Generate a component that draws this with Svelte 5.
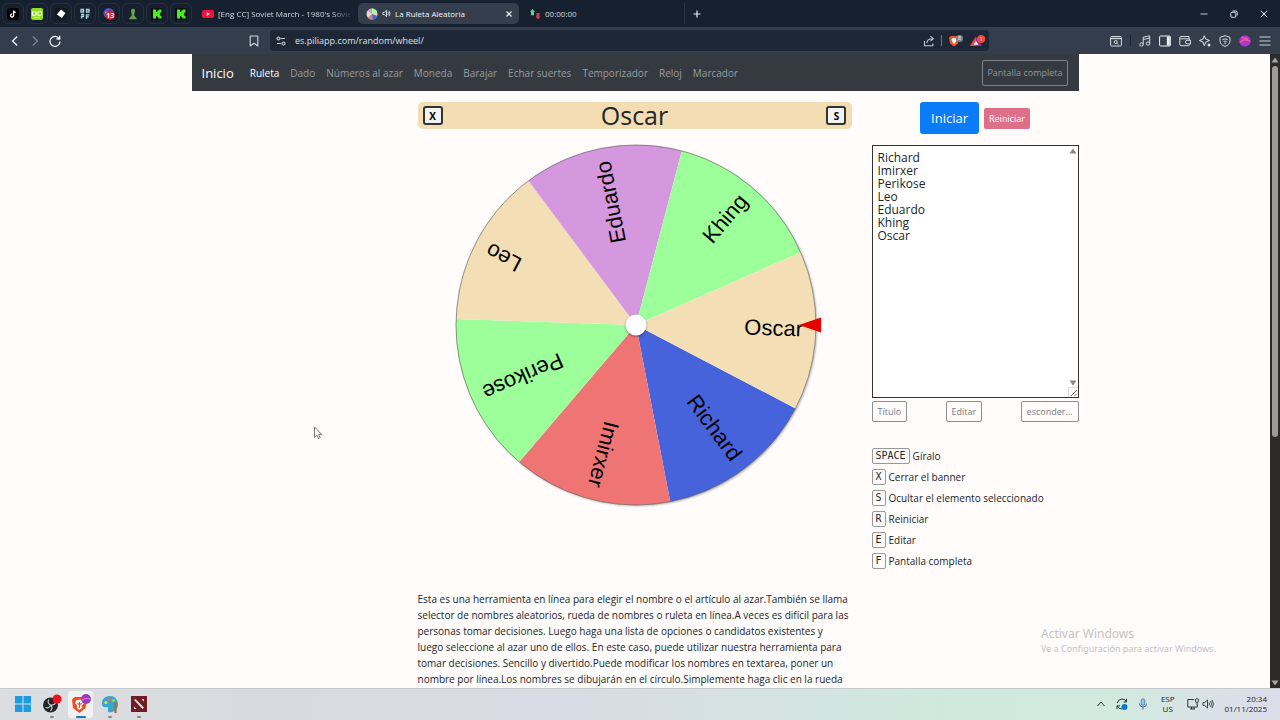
<script lang="ts">
  const navLinks = [
    "Ruleta",
    "Dado",
    "Números al azar",
    "Moneda",
    "Barajar",
    "Echar suertes",
    "Temporizador",
    "Reloj",
    "Marcador",
  ];

  const shortcuts = [
    { key: "SPACE", label: "Gíralo" },
    { key: "X", label: "Cerrar el banner" },
    { key: "S", label: "Ocultar el elemento seleccionado" },
    { key: "R", label: "Reiniciar" },
    { key: "E", label: "Editar" },
    { key: "F", label: "Pantalla completa" },
  ];

  const colors = [
    "#4763dc",
    "#ef7575",
    "#9dff99",
    "#f3deb6",
    "#d597de",
    "#9dff99",
    "#f3deb6",
  ];

  const radius = 180;
  const labelRadius = 167;
  const startAngle = 27.6;

  let text = $state("Richard\nImirxer\nPerikose\nLeo\nEduardo\nKhing\nOscar");
  let url = $state("es.piliapp.com/random/wheel/");

  const names = $derived(text.split("\n").filter((n) => n.trim() !== ""));
  const step = $derived(360 / names.length);

  const point = (angle: number) => {
    const rad = (angle * Math.PI) / 180;
    return `${(Math.cos(rad) * radius).toFixed(2)} ${(Math.sin(rad) * radius).toFixed(2)}`;
  };

  const slices = $derived(
    names.map((name, i) => {
      const from = startAngle + i * step;
      return {
        name,
        color: colors[i % colors.length],
        angle: from + step / 2,
        path: `M0 0L${point(from)}A${radius} ${radius} 0 0 1 ${point(from + step)}Z`,
      };
    }),
  );
</script>

<div class="screen">
  <header class="tabs">
    <div class="pinned">
      <button class="pin" aria-label="TikTok">
        <svg viewBox="0 0 12 12"><rect width="12" height="12" rx="2" fill="#000" /><path d="M6.6 2.5v5a1.5 1.5 0 1 1-1.5-1.5M6.6 2.6c.2 1.2 1 1.8 2.1 1.9" fill="none" stroke="#fff" stroke-width="1.3" /></svg>
      </button>
      <button class="pin" aria-label="Chat">
        <svg viewBox="0 0 12 12"><rect width="12" height="12" rx="2" fill="#8fe01f" /><rect x="1.5" y="3.5" width="3.6" height="4" rx="1.2" fill="none" stroke="#fff" stroke-width="1.2" /><rect x="6.9" y="3.5" width="3.6" height="4" rx="1.2" fill="none" stroke="#fff" stroke-width="1.2" /><path d="M3 9.5h6" stroke="#fff" /></svg>
      </button>
      <button class="pin" aria-label="Diamond">
        <svg viewBox="0 0 12 12"><rect width="12" height="12" rx="2" fill="#111820" /><path d="M6 1.5 10.5 5 7 10 1.8 6.4Z" fill="#fff" /></svg>
      </button>
      <button class="pin" aria-label="Overlay">
        <svg viewBox="0 0 12 12"><path d="M2 1.500h2.500V4H2zM7.500 1.500H10V4H7.500zM2 6.500h2.500v2H2.500v2M7.500 11V6.800h3M7.500 8.800h2.300" fill="none" stroke="#a9d6dc" stroke-width="1.300" /></svg>
      </button>
      <button class="pin" aria-label="Messages">
        <svg viewBox="0 0 12 12"><circle cx="5.6" cy="5.3" r="5.2" fill="#4a55c6" /><path d="M2.3 4.4h6" stroke="#b8bef5" stroke-width="1.6" /><circle cx="7.2" cy="7.2" r="4.8" fill="#d9202a" /><text x="7.2" y="9.7" text-anchor="middle" font-size="7" font-weight="700" fill="#fff">13</text></svg>
      </button>
      <button class="pin" aria-label="Chess">
        <svg viewBox="0 0 12 12"><path d="M6 .8a2 2 0 0 1 1.2 3.6h.8v1H7.1c0 2 .6 3.2 2 4.1.6.5.7 1.5.7 1.7H2.200c0-.2.1-1.200.7-1.700C4.300 8.600 4.900 7.400 4.900 5.400H4v-1h.8A2 2 0 0 1 6 .8Z" fill="#6ba04f" /></svg>
      </button>
      <button class="pin" aria-label="Kick">
        <svg viewBox="0 0 12 12"><rect width="12" height="12" rx="1" fill="#0a0f0a" /><path d="M2 1.500h3v2.500h1.200V2.800h1.200V1.500h3.100v3H9.200v1.500H8.500v.3h.7v1.400h1.300v2.800H7.400V9.200H6.200V8H5v2.500H2Z" fill="#45f01e" /></svg>
      </button>
      <button class="pin" aria-label="Kick">
        <svg viewBox="0 0 12 12"><rect width="12" height="12" rx="1" fill="#0a0f0a" /><path d="M2 1.500h3v2.500h1.200V2.800h1.200V1.500h3.100v3H9.200v1.500H8.500v.3h.7v1.400h1.300v2.800H7.400V9.200H6.200V8H5v2.500H2Z" fill="#45f01e" /></svg>
      </button>
    </div>
    <button class="tab">
      <svg class="fav" viewBox="0 0 12 12"><rect y="2" width="12" height="8" rx="2" fill="#f0143c" /><path d="m4.800 4.200 3 1.800-3 1.800Z" fill="#fff" /></svg>
      <span class="title faded">[Eng CC] Soviet March - 1980's Sovie</span>
    </button>
    <button class="tab active">
      <svg class="fav" viewBox="0 0 12 12"><circle cx="6" cy="6" r="5.500" fill="#ead8b8" /><path d="M6 6 1.800 2.500A5.500 5.500 0 0 1 6 .5Z" fill="#d597de" /><path d="M6 6V.5a5.500 5.500 0 0 1 5 3.500Z" fill="#9dff99" /><path d="m6 6 5.300 2A5.500 5.500 0 0 1 6.500 11.500Z" fill="#4763dc" /><path d="M6 6v5.500A5.500 5.500 0 0 1 2 9.700Z" fill="#ef7575" /></svg>
      <svg class="sound" viewBox="0 0 10 10"><path d="M1 3.800h1.600L5 1.500v7L2.600 6.200H1ZM6.500 3.500q1.200 1.500 0 3M7.700 2q2.400 3 0 6" fill="none" stroke="#e6eaf0" /></svg>
      <span class="title">La Ruleta Aleatoria</span>
      <svg class="close" viewBox="0 0 8 8"><path d="m1.500 1.500 5 5m0-5-5 5" stroke="#f2f4f7" stroke-width="1.200" /></svg>
    </button>
    <button class="tab timer">
      <svg class="fav" viewBox="0 0 12 12"><path d="M3.500 1 6 3.800H5v3.400H2V3.800H1Z" fill="#57d977" /><path d="M9 11.500 6.500 8.600h1V5h3v3.600h1Z" fill="#d43c4c" /></svg>
      <span class="title">00:00:00</span>
    </button>
    <button class="new-tab" aria-label="Nueva pestaña">
      <svg viewBox="0 0 8 8"><path d="M4 .5v7M.5 4h7" stroke="#e8ecf2" stroke-width="1.200" /></svg>
    </button>
    <div class="window-buttons">
      <button aria-label="Minimizar"><svg viewBox="0 0 8 8"><path d="M.5 4h7" stroke="#c3c8d0" /></svg></button>
      <button aria-label="Restaurar"><svg viewBox="0 0 8 8"><rect x=".8" y="2.300" width="5" height="5" rx="1" fill="none" stroke="#dfe3e8" /><path d="M2.500 1h3.300q1.400 0 1.400 1.400V5.500" fill="none" stroke="#dfe3e8" /></svg></button>
      <button aria-label="Cerrar"><svg viewBox="0 0 8 8"><path d="m.8.8 6.400 6.400m0-6.400L.8 7.200" stroke="#eceff3" /></svg></button>
    </div>
  </header>

  <div class="toolbar">
    <div class="tools history">
      <button aria-label="Atrás"><svg viewBox="0 0 12 12"><path d="M8.200 1.500 3.500 6l4.700 4.500" fill="none" stroke="#eef1f5" stroke-width="1.300" /></svg></button>
      <button aria-label="Adelante"><svg viewBox="0 0 12 12"><path d="M3.800 1.500 8.500 6l-4.700 4.500" fill="none" stroke="#7d8592" stroke-width="1.300" /></svg></button>
      <button aria-label="Recargar"><svg viewBox="0 0 12 12"><path d="M10.200 3.700A5 5 0 1 0 11 6.500M10.700.8v3.200H7.500" fill="none" stroke="#eef1f5" stroke-width="1.300" /></svg></button>
      <button class="bookmark" aria-label="Marcador"><svg viewBox="0 0 12 12"><path d="M2.200 1h7.600v10L6 8.200 2.200 11Z" fill="none" stroke="#cfd4dc" stroke-linejoin="round" stroke-width="1.100" /></svg></button>
    </div>
    <div class="address">
      <svg viewBox="0 0 12 12"><g fill="none" stroke="#c9ced6" stroke-width="1.100"><circle cx="3.500" cy="3.500" r="1.500" /><path d="M5.500 3.500H10M2 8.500h4" /><circle cx="8.500" cy="8.500" r="1.500" /></g></svg>
      <input class="url" aria-label="Dirección" bind:value={url} />
      <svg viewBox="0 0 12 12"><path d="M1.500 6v4.700h8.300V8.500M3.800 8c.3-3 2-4.300 5.500-4.300M7.500 1.200 10.300 3.700 7.500 6.200" fill="none" stroke="#c3c8d1" stroke-width="1.100" /></svg>
      <i class="bar"></i>
      <svg class="wide" viewBox="0 0 16 12"><path d="M3 1h6l2 1.500L10 8.500 6 11.500 2 8.500 1 2.500Z" fill="#f0562b" /><path d="M4 3.500 6 3l2 .5.5 1.500L7 8 6 9 5 8 3.500 5Z" fill="#fff" /><circle cx="11.500" cy="3.500" r="3.500" fill="#7b8490" /><text x="11.500" y="5.300" text-anchor="middle" font-size="5" fill="#fff">8</text></svg>
      <svg class="wide" viewBox="0 0 16 12"><path d="M6 1.500 12 11H0Z" fill="#94339a" /><path d="M6 1.500 0 11h6Z" fill="#ec4a31" /><path d="m6 6 2.400 3.800H3.600Z" fill="#fff" /><circle cx="11.200" cy="4" r="4" fill="#f04a3c" /><text x="11.200" y="6" text-anchor="middle" font-size="5" fill="#fff">1</text></svg>
    </div>
    <div class="tools extras">
      <button aria-label="Buscar en la página"><svg viewBox="0 0 12 12"><g fill="none" stroke="#d5dae1"><rect x=".6" y="1.500" width="10.800" height="9.500" rx="1" /><path d="M.6 3.500h10.800" stroke-width="1.400" /><circle cx="5.800" cy="7" r="1.500" /><path d="m7 8.200 1.300 1.300" /></g></svg></button>
      <i class="bar dark"></i>
      <button aria-label="Música"><svg viewBox="0 0 12 12"><g fill="none" stroke="#d5dae1"><circle cx="2.500" cy="9.500" r="1.700" /><circle cx="9" cy="8.500" r="1.700" /><path d="M4.200 9.500V2.200L10.700.8v7.700M4.200 4.500l6.500-1.400" /></g></svg></button>
      <button aria-label="Barra lateral"><svg viewBox="0 0 12 12"><rect x=".6" y="1" width="10.800" height="10" rx="1" fill="none" stroke="#eef1f5" /><path d="M7.800 1.500h3v9h-3z" fill="#eef1f5" /></svg></button>
      <button aria-label="Cartera"><svg viewBox="0 0 12 12"><g fill="none" stroke="#d5dae1"><path d="M10 4V1.500H2Q.8 1.500.8 2.700V9.500Q.8 10.700 2 10.700h7.500q1 0 1-1V9M1 3.800h9.300v1.500" /><path d="M11.500 5.300H8.200a1.700 1.700 0 0 0 0 3.600h3.300Z" /></g></svg></button>
      <button aria-label="Leo"><svg viewBox="0 0 12 12"><path d="M5.300.8 6.700 4l3.800 1.500L7 7 5.300 10.700 4 7 .5 5.500 4 4Z" fill="none" stroke="#e3e7ec" /><circle cx="10" cy="10" r="1.500" fill="#e3e7ec" /></svg></button>
      <button aria-label="VPN"><svg viewBox="0 0 12 12"><g fill="none" stroke="#d5dae1"><path d="M6 .7 11 2.300v3.500C11 8.500 8.800 10.500 6 11.500 3.200 10.500 1 8.500 1 5.800V2.300Z" /><path d="M3.300 4.800q2.700-2 5.400 0M4.500 6.600q1.500-1 3 0" /></g><circle cx="6" cy="8.200" r=".8" fill="#d5dae1" /></svg></button>
      <button aria-label="Perfil"><svg viewBox="0 0 12 12"><circle cx="6" cy="6" r="5.700" fill="#a43bc8" /><path d="M.8 7.500Q5 2.500 11.300 6.500M2.500 2.200 9 3.800" fill="none" stroke="#ff4fa0" stroke-width="1.400" /></svg></button>
      <button aria-label="Menú"><svg viewBox="0 0 12 12"><path d="M.5 2h11M.5 6h11M.5 10h11" stroke="#cdd2d9" stroke-width="1.100" /></svg></button>
    </div>
  </div>

  <div class="viewport">
    <div class="page">
      <nav>
        <a class="brand" href="#inicio">Inicio</a>
        {#each navLinks as link, i}
          <a class:current={i === 0} href="#{link}">{link}</a>
        {/each}
        <button class="outline fullscreen">Pantalla completa</button>
      </nav>

      <main>
        <section class="wheel-column">
          <div class="banner">
            <button class="key-button">X</button>
            <h1>{names[names.length - 1]}</h1>
            <button class="key-button">S</button>
          </div>
          <svg class="wheel" viewBox="-218 -182 434 364" role="img" aria-label="Ruleta">
            <circle class="rim" r={radius} />
            {#each slices as slice}
              <path d={slice.path} fill={slice.color} />
            {/each}
            <circle r={radius} fill="none" stroke="#555" stroke-opacity="0.6" />
            {#each slices as slice}
              <text class="name" x={labelRadius} y="6" transform="rotate({slice.angle})">{slice.name}</text>
            {/each}
            <circle class="hub" r="10.5" />
            <path d="M163 0 185-7.500v15Z" fill="#e60000" />
          </svg>
          <p>
            Esta es una herramienta en línea para elegir el nombre o el artículo al azar.También se llama<br />
            selector de nombres aleatorios, rueda de nombres o ruleta en línea.A veces es difícil para las<br />
            personas tomar decisiones. Luego haga una lista de opciones o candidatos existentes y<br />
            luego seleccione al azar uno de ellos. En este caso, puede utilizar nuestra herramienta para<br />
            tomar decisiones. Sencillo y divertido.Puede modificar los nombres en textarea, poner un<br />
            nombre por línea.Los nombres se dibujarán en el círculo.Simplemente haga clic en la rueda
          </p>
        </section>

        <aside>
          <div class="actions">
            <button class="start">Iniciar</button>
            <button class="reset">Reiniciar</button>
          </div>
          <div class="names">
            <textarea aria-label="Nombres" bind:value={text} spellcheck="false"></textarea>
            <svg class="arrow-up" viewBox="0 0 8 6"><path d="M4 .5 7.500 5.500h-7Z" fill="#858585" /></svg>
            <svg class="arrow-down" viewBox="0 0 8 6"><path d="M4 5.500 7.500.5h-7Z" fill="#858585" /></svg>
            <svg class="grip" viewBox="0 0 10 10"><path d="M.5 10V.5H10" fill="none" stroke="#ddd" /><path d="m3 9 6-6M6.500 9 9 6.500" stroke="#777" /></svg>
          </div>
          <div class="edit-row">
            <button class="outline">Título</button>
            <button class="outline">Editar</button>
            <button class="outline">esconder...</button>
          </div>
          <ul>
            {#each shortcuts as { key, label }}
              <li><kbd>{key}</kbd>{label}</li>
            {/each}
          </ul>
        </aside>
      </main>
    </div>

    <div class="scrollbar">
      <svg viewBox="0 0 8 6"><path d="M4 .5 7.500 5.500h-7Z" fill="#a5a5a5" /></svg>
      <i class="thumb"></i>
      <svg viewBox="0 0 8 6"><path d="M4 5.500 7.500.5h-7Z" fill="#a5a5a5" /></svg>
    </div>

    <div class="watermark">
      <strong>Activar Windows</strong>
      <span>Ve a Configuración para activar Windows.</span>
    </div>
    <svg class="cursor" viewBox="0 0 10 14"><path d="M1.500 1v10.500L4 9.300l1.500 3.200 1.700-.8-1.500-3h3.200Z" fill="#fff" stroke="#555" stroke-width=".8" /></svg>
  </div>

  <footer>
    <div class="apps">
      <button aria-label="Inicio"><svg viewBox="0 0 16 16"><path d="M0 0h7.500v7.500H0zM8.500 0H16v7.500H8.500zM0 8.500h7.500V16H0zM8.500 8.500H16V16H8.500z" fill="#1f9ce0" /></svg></button>
      <button class="running" aria-label="OBS"><svg viewBox="0 0 20 20"><circle cx="8.500" cy="11" r="7.500" fill="#22242a" /><path d="M7 5.500q-2.500 3 1.500 5.500 4.500.5 5-2.500M8.500 11q-1 4-5 2.500M8.500 11q3 3 0 6" fill="none" stroke="#cfd1d6" stroke-width="1.100" /><circle cx="15" cy="5" r="4.500" fill="#f20d1c" /></svg></button>
      <button class="running focused" aria-label="Brave"><svg viewBox="0 0 20 20"><path d="M3.500 3h9L16 5.500l-1.500 8.500L8.500 19 2 14 1 5.500Z" fill="#ef4a20" /><path d="m5 6.500 3.500-1 3.500 1 .8 3-2.300 2.500 1 1.500-3 2.500-3-2.500 1-1.500-2.300-2.500Z" fill="#fff" /><path d="M8.500 8v6M6.500 9.500l2 1 2-1" stroke="#ef4a20" stroke-width="1.200" fill="none" /><circle cx="15" cy="5" r="5" fill="#943bc4" /><path d="M10.500 6.500Q15 3 19.500 5.500" stroke="#e068d0" stroke-width="1.300" fill="none" /></svg></button>
      <button class="running" aria-label="Paint"><svg viewBox="0 0 20 20"><path d="M10 2C4.500 2 1.500 6 2 10.500c.3 3 2.800 3 4.500 2.500 1.500-.3 2 .8 1.500 2.300C7.300 18 9 19 12 18c4-1.200 6.500-4.300 6-8.500C17.500 5 14.500 2 10 2Z" fill="#35a7d3" /><circle cx="6" cy="8.500" r="1.600" fill="#f5d74d" /><circle cx="9.500" cy="5.500" r="1.600" fill="#ee6d50" /><circle cx="13.500" cy="6.500" r="1.600" fill="#7fdf6a" /><path d="M15.500 8v11" stroke="#a96d36" stroke-width="2.200" /></svg></button>
      <button class="running" aria-label="Dota 2"><svg viewBox="0 0 16 16"><rect width="16" height="16" fill="#701c24" /><path d="m3 4 1.500-1L13 11.500 11.500 13ZM10.500 3.500 13 3v2.500ZM3 10.500 5.500 13H3Z" fill="#ead9d8" /></svg></button>
    </div>
    <div class="tray">
      <svg viewBox="0 0 12 12"><path d="m2.500 8 3.500-4 3.500 4" fill="none" stroke="#333" /></svg>
      <svg viewBox="0 0 12 12"><path d="M1 5Q2.500 1 6 1t4.500 3V.8M10.500 4H7.500M1 11V7.800h3M1 8Q2.500 11 6 11" fill="none" stroke="#26393d" /><circle cx="8.500" cy="9" r="3" fill="#0878c9" /></svg>
      <svg viewBox="0 0 12 12"><rect x="4.200" y=".8" width="3.600" height="6.500" rx="1.800" fill="#9fc5e8" stroke="#3f72a8" stroke-width=".8" /><path d="M2.500 5.500Q2.500 9 6 9t3.500-3.500M6 9v2.500" fill="none" stroke="#3f72a8" /></svg>
      <span class="stacked lang">ESP<br />US</span>
      <div class="status">
        <svg viewBox="0 0 12 12"><path d="M7 1.500H.8V9h9.500V6.500M3 11h5M4.500 9v2M7 9v2" fill="none" stroke="#26393d" /><rect x="8.500" y=".8" width="2.800" height="3.600" rx=".8" fill="none" stroke="#26393d" /><path d="M10 4.500V7" stroke="#26393d" /></svg>
        <svg viewBox="0 0 12 12"><path d="M1 4.500h1.800L5.500 2v8L2.800 7.500H1ZM7 4.500q1 1.500 0 3M8.500 3q2.200 3 0 6M10 1.800q3 4.200 0 8.400" fill="none" stroke="#26393d" stroke-width=".9" /></svg>
      </div>
      <span class="stacked clock">20:34<br />01/11/2025</span>
    </div>
  </footer>
</div>

<style>
  :global(body) {
    margin: 0;
    background: #fffcfb;
  }

  .screen {
    display: flex;
    flex-direction: column;
    height: 100vh;
    overflow: hidden;
    font-family: "Open Sans", "Noto Sans", sans-serif;
    font-size: 10px;
    color: #212529;
  }

  .screen :global(*) {
    box-sizing: border-box;
  }

  svg {
    display: block;
    flex: none;
  }

  button,
  input,
  textarea {
    font-family: inherit;
    color: inherit;
    margin: 0;
    padding: 0;
    border: 0;
    background: none;
  }

  /* browser tabs */
  .tabs {
    flex: none;
    display: flex;
    align-items: center;
    height: 27px;
    padding-left: 2px;
    background: #17202e;
    color: #d3d8df;
  }
  .pinned {
    display: flex;
    gap: 2px;
    margin-right: 10px;
  }
  .pin {
    display: grid;
    place-items: center;
    width: 22px;
    height: 21px;
    border: 1px solid #27303e;
    border-radius: 6px;
  }
  .pin svg,
  .fav {
    width: 12px;
    height: 12px;
  }
  .tab {
    display: flex;
    align-items: center;
    gap: 4px;
    width: 156px;
    height: 21px;
    font-size: 8px;
    text-align: left;
    border-radius: 5px;
  }
  .tab.active {
    width: 161px;
    padding: 0 6px 0 8px;
    background: #353e4c;
    color: #f2f4f7;
  }
  .tab.timer {
    width: 166px;
    padding-left: 10px;
    border-right: 1px solid #2c3543;
    border-radius: 0;
  }
  .title {
    flex: 1;
    overflow: hidden;
    white-space: nowrap;
  }
  .faded {
    margin-right: 6px;
    mask-image: linear-gradient(to left, transparent, #000 20px);
  }
  .sound {
    width: 9px;
    height: 9px;
  }
  .close {
    width: 8px;
    height: 8px;
  }
  .new-tab {
    margin-left: 8px;
  }
  .new-tab svg,
  .window-buttons svg {
    width: 8px;
    height: 8px;
  }
  .window-buttons {
    display: flex;
    gap: 22px;
    margin-left: auto;
    margin-right: 12px;
  }

  /* address bar */
  .toolbar {
    flex: none;
    display: flex;
    align-items: center;
    height: 27px;
    background: #343d4b;
    color: #dfe3e9;
  }
  .toolbar svg {
    width: 12px;
    height: 12px;
  }
  .toolbar .wide {
    width: 16px;
  }
  .tools {
    display: flex;
    align-items: center;
    gap: 8px;
  }
  .history {
    flex: none;
    width: 270px;
    padding: 0 10px 0 9px;
  }
  .bookmark {
    margin-left: auto;
  }
  .address {
    flex: 1;
    display: flex;
    align-items: center;
    gap: 6px;
    height: 21px;
    padding: 0 3px 0 5px;
    border-radius: 4px;
    background: #1e2735;
  }
  .url {
    flex: 1;
    min-width: 0;
    padding-left: 2px;
    font-size: 9px;
    outline: 0;
  }
  .bar {
    width: 1px;
    height: 11px;
    background: #6d7683;
  }
  .dark {
    background: #1e2735;
  }
  .extras {
    flex: none;
    width: 291px;
    justify-content: flex-end;
    padding-right: 9px;
  }

  /* page */
  .viewport {
    position: relative;
    flex: 1;
    min-height: 0;
    display: flex;
    overflow: hidden;
  }
  .page {
    flex: 1;
    padding: 0 16px;
  }
  nav {
    display: flex;
    align-items: center;
    gap: 11px;
    max-width: 887px;
    height: 37px;
    margin: 0 auto;
    padding: 0 11px 0 10px;
    background: #343a40;
  }
  nav a {
    color: #999c9f;
    text-decoration: none;
    white-space: nowrap;
  }
  nav .current {
    color: #fff;
  }
  nav .brand {
    margin-right: 5px;
    font-size: 13px;
    color: #fff;
  }
  .outline {
    height: 21px;
    padding: 0 5px;
    border: 1px solid #8a9096;
    border-radius: 2px;
    color: #777d82;
    font-size: 9px;
    white-space: nowrap;
  }
  .fullscreen {
    height: 26px;
    margin-left: auto;
    padding: 0 4px;
    color: #8f969c;
    border-color: #7b8288;
  }
  main {
    display: grid;
    grid-template-columns: 434px 207px;
    justify-content: end;
    gap: 20px;
    max-width: 887px;
    margin: 0 auto;
    padding-top: 11px;
  }
  .banner {
    display: flex;
    align-items: center;
    justify-content: space-between;
    height: 27px;
    padding: 0 5px;
    border-radius: 5px;
    background: #f3deb3;
  }
  h1 {
    margin: 0;
    font-size: 25px;
    font-weight: 400;
    line-height: 27px;
  }
  .key-button {
    width: 20px;
    height: 19px;
    border: 2px solid #333;
    border-radius: 3px;
    background: #f2f2f2;
    color: #000;
    font-size: 10px;
    font-weight: 700;
    line-height: 14px;
  }
  .wheel {
    width: 100%;
    margin-top: 14px;
    overflow: visible;
  }
  .rim {
    fill: #fff;
    filter: drop-shadow(1px 1px 1px #0005);
  }
  .name {
    font-family: "Liberation Sans", Arial, sans-serif;
    font-size: 22px;
    text-anchor: end;
    fill: #000;
  }
  .hub {
    fill: #fff;
    filter: drop-shadow(0 1px 1px #0006);
  }
  p {
    margin: 84px 0 0;
    line-height: 16px;
    white-space: nowrap;
  }

  .actions {
    display: flex;
    align-items: center;
    justify-content: center;
    gap: 5px;
    height: 32px;
    margin-bottom: 11px;
  }
  .start {
    height: 32px;
    padding: 0 11px;
    border-radius: 3px;
    background: #0a7cfa;
    color: #fff;
    font-size: 13px;
  }
  .reset {
    height: 21px;
    padding: 0 5px;
    border-radius: 2px;
    background: #dd6f88;
    color: #fff;
    font-size: 9px;
  }
  .names {
    position: relative;
  }
  textarea {
    display: block;
    width: 100%;
    height: 253px;
    padding: 5px;
    border: 1px solid #333;
    background: #fff;
    font-size: 12px;
    line-height: 13px;
    resize: none;
    outline: 0;
  }
  .arrow-up,
  .arrow-down,
  .grip {
    position: absolute;
    right: 2px;
    width: 8px;
    height: 6px;
  }
  .arrow-up {
    top: 3px;
  }
  .arrow-down {
    bottom: 12px;
  }
  .grip {
    right: 1px;
    bottom: 1px;
    width: 10px;
    height: 10px;
  }
  .edit-row {
    display: flex;
    justify-content: space-between;
    margin-top: 3px;
  }
  ul {
    display: grid;
    gap: 5px;
    margin: 26px 0 0;
    padding: 0;
    list-style: none;
  }
  li {
    display: flex;
    align-items: center;
    gap: 3px;
    height: 16px;
    white-space: nowrap;
  }
  kbd {
    min-width: 13px;
    padding: 0 3px;
    border: 1px solid #999;
    border-radius: 2px;
    font-family: "DejaVu Sans Mono", monospace;
    font-size: 10px;
    line-height: 14px;
    text-align: center;
  }

  .scrollbar {
    display: flex;
    flex-direction: column;
    align-items: center;
    width: 10px;
    padding: 3px 0 2px;
    background: #2b2b2b;
  }
  .scrollbar svg {
    width: 8px;
    height: 6px;
  }
  .thumb {
    width: 6px;
    height: 59%;
    margin: 3px 0 auto;
    border-radius: 3px;
    background: #9b9b9b;
  }
  .watermark {
    position: absolute;
    right: 55px;
    bottom: 32px;
    display: flex;
    flex-direction: column;
    width: 184px;
    color: #c3c2c2;
    font-family: "Noto Sans", "Open Sans", sans-serif;
    font-size: 9px;
    line-height: 14px;
    white-space: nowrap;
  }
  .watermark strong {
    font-size: 12px;
    font-weight: 400;
    line-height: 17px;
  }
  .cursor {
    position: absolute;
    left: 313px;
    top: 372px;
    width: 10px;
    height: 14px;
  }

  /* taskbar */
  footer {
    flex: none;
    display: flex;
    align-items: center;
    justify-content: space-between;
    height: 32px;
    padding: 0 13px 1px 10px;
    border-top: 1px solid #c5c9cb;
    background: linear-gradient(to right, #dbdee1, #d9dadf 20%, #d8dce4 45%, #cfe9de 75%, #d3e9e0 88%, #dddcea);
  }
  .apps {
    display: flex;
    gap: 4px;
  }
  .apps button {
    position: relative;
    display: grid;
    place-items: center;
    width: 25px;
    height: 27px;
    border-radius: 3px;
  }
  .apps svg {
    width: 16px;
    height: 16px;
  }
  .apps svg[viewBox="0 0 20 20"] {
    width: 20px;
    height: 20px;
  }
  .running::after {
    content: "";
    position: absolute;
    bottom: 0;
    width: 4px;
    height: 2px;
    border-radius: 1px;
    background: #85888b;
  }
  .focused {
    background: #f1f2f4;
  }
  .focused::after {
    width: 10px;
    background: #1976bd;
  }
  .tray {
    display: flex;
    align-items: center;
    gap: 9px;
  }
  .tray svg {
    width: 12px;
    height: 12px;
  }
  .status {
    display: flex;
    gap: 3px;
    margin-right: 2px;
  }
  .stacked {
    font-size: 8px;
    line-height: 10px;
    color: #1c2324;
    text-align: center;
  }
  .lang {
    margin: 0 3px;
  }
  .clock {
    text-align: right;
  }
</style>
